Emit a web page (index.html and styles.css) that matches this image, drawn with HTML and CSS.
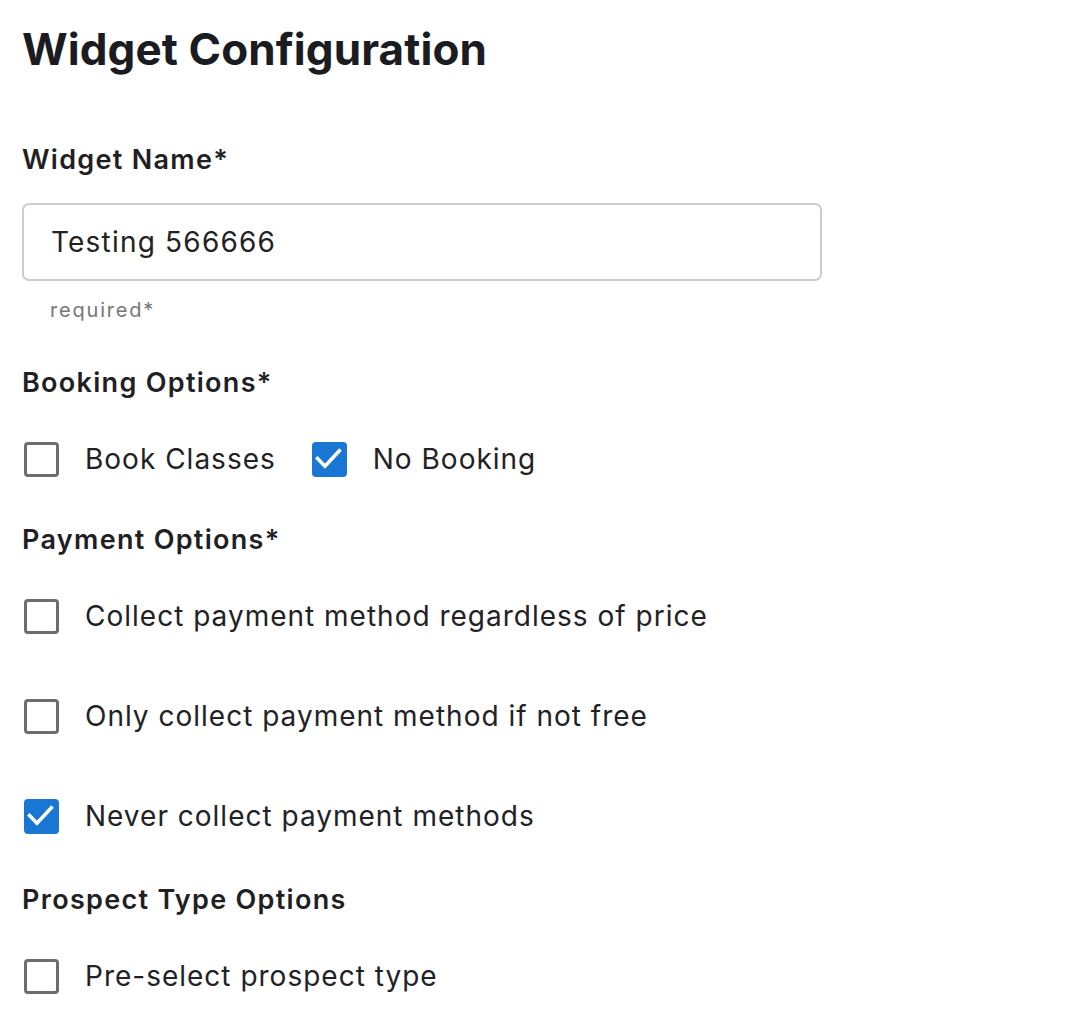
FILE: index.html
```html
<!DOCTYPE html>
<html>
<head>
    <title>Widget Configuration</title>
    <link rel="stylesheet" href="styles.css">
</head>
<body>
    <h1 class="page-title">Widget Configuration</h1>
    <form id="widgetForm">
        <label class="field-label" for="widgetName">Widget Name*</label>
        <input class="text-input" type="text" id="widgetName" name="widgetName" value="Testing 566666">
        <div class="helper">required*</div>

        <div class="field-label section">Booking Options*</div>
        <div class="check-row">
            <label class="check">
                <span class="box"></span>
                <span class="check-text">Book Classes</span>
            </label>
            <label class="check">
                <span class="box checked">
                    <svg viewBox="0 0 29 29"><path d="M2.5 13.5L10 21.2L24.3 5.8"/></svg>
                </span>
                <span class="check-text">No Booking</span>
            </label>
        </div>

        <div class="field-label section">Payment Options*</div>
        <div class="check-list">
            <label class="check">
                <span class="box"></span>
                <span class="check-text">Collect payment method regardless of price</span>
            </label>
            <label class="check">
                <span class="box"></span>
                <span class="check-text">Only collect payment method if not free</span>
            </label>
            <label class="check">
                <span class="box checked">
                    <svg viewBox="0 0 29 29"><path d="M2.5 13.5L10 21.2L24.3 5.8"/></svg>
                </span>
                <span class="check-text">Never collect payment methods</span>
            </label>
        </div>

        <div class="field-label section last">Prospect Type Options</div>
        <div class="check-row">
            <label class="check">
                <span class="box"></span>
                <span class="check-text">Pre-select prospect type</span>
            </label>
        </div>
    </form>
</body>
</html>
```

FILE: styles.css
```css
body {
    margin: 0;
    padding: 24px 22px 0;
    font-family: Inter, "Open Sans", sans-serif;
    color: #222226;
    background: #fff;
}
.page-title {
    margin: 0;
    height: 50px;
    line-height: 50px;
    font-size: 44px;
    font-weight: 700;
    letter-spacing: 0.1px;
    color: #1b1b22;
}
#widgetForm {
    display: flex;
    flex-direction: column;
    align-items: flex-start;
}
.field-label {
    display: block;
    margin-top: 66px;
    height: 40px;
    line-height: 40px;
    font-size: 27px;
    font-weight: 600;
    letter-spacing: 1.3px;
    color: #1f1f24;
}
.field-label.section {
    margin-top: 41px;
}
.field-label.section.last {
    margin-top: 44px;
}
.text-input {
    box-sizing: border-box;
    width: 800px;
    height: 78px;
    margin: 23px 0 0;
    padding: 0 27px;
    border: 2px solid #cccccc;
    border-radius: 7px;
    font-family: inherit;
    font-size: 28px;
    letter-spacing: 1.2px;
    color: #222;
    outline: none;
}
.helper {
    margin-top: 17px;
    padding-left: 28px;
    height: 24px;
    line-height: 24px;
    font-size: 20px;
    letter-spacing: 1.8px;
    color: #777777;
}
.check-row {
    margin-top: 36px;
    display: flex;
    gap: 34px;
}
.check-list {
    margin-top: 36px;
    display: flex;
    flex-direction: column;
    gap: 60px;
}
.check {
    display: flex;
    align-items: center;
    height: 40px;
    gap: 26px;
    padding-left: 2px;
    cursor: pointer;
}
.box {
    box-sizing: border-box;
    width: 35px;
    height: 35px;
    border: 3px solid #6d6d6d;
    border-radius: 4px;
    display: flex;
    align-items: center;
    justify-content: center;
}
.box.checked {
    background: #1976d2;
    border-color: #1976d2;
}
.box svg {
    width: 29px;
    height: 29px;
    fill: none;
    stroke: #fff;
    stroke-width: 3.6;
    stroke-linecap: square;
    stroke-linejoin: miter;
}
.check-text {
    font-size: 28px;
    letter-spacing: 1px;
    color: #222226;
}
```
